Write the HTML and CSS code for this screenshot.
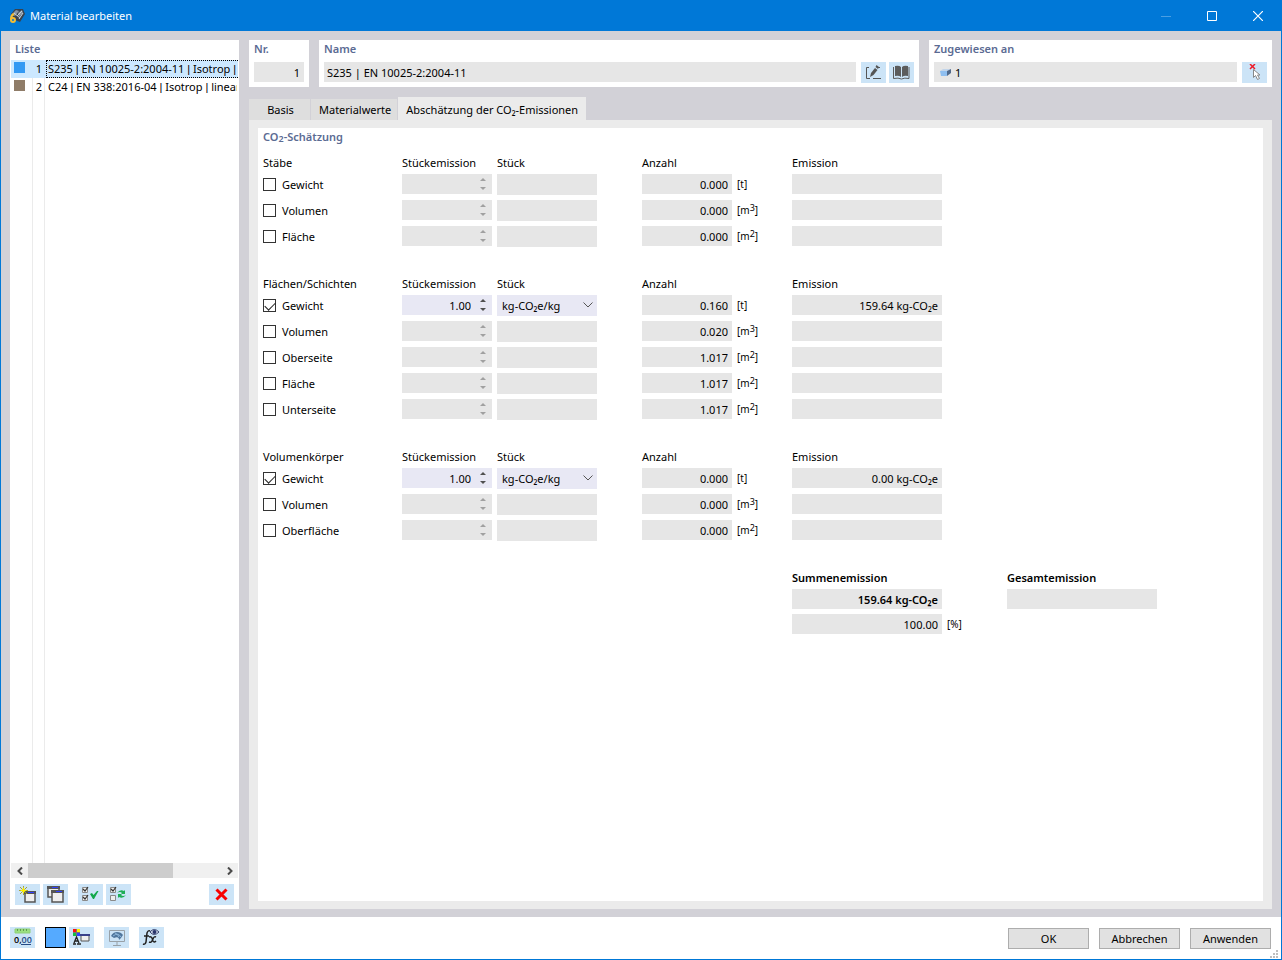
FILE: index.html
```html
<!DOCTYPE html>
<html lang="de">
<head>
<meta charset="utf-8">
<title>Material bearbeiten</title>
<link rel="stylesheet" href="styles.css">
</head>
<body>
<div class="window">
  <header class="titlebar">
    <svg class="app-icon" viewBox="0 0 16 16" width="16" height="16" aria-hidden="true">
      <path d="M2 6 6 1 14 1 16 6 11 14 6 12Z" fill="#38424e"/>
      <path d="M3 6 7 2 10 3 6 8ZM9 5l4-3 1 3-4 4Z" fill="#8795a5"/>
      <path d="M8 8l5-5M5 5l6 5M10 11l4-6" stroke="#c6d0da" stroke-width="1"/>
      <path d="M5 6Q2 7 2 11v1q0 2 2 2t2-2-2-2-2 2" fill="none" stroke="#f3bd35" stroke-width="2"/>
    </svg>
    <h1 class="window-title">Material bearbeiten</h1>
    <div class="window-controls">
      <button class="window-button" aria-label="Minimieren" disabled><svg width="10" height="10"><path d="M0 5.500h10" stroke="#4a9fe3"/></svg></button>
      <button class="window-button" aria-label="Maximieren"><svg width="10" height="10"><path d="M.5 .5h9v9h-9z" fill="none" stroke="#fff"/></svg></button>
      <button class="window-button" aria-label="Schließen"><svg width="10" height="10"><path d="M0 0l10 10M10 0L0 10" stroke="#fff" stroke-width="1.200"/></svg></button>
    </div>
  </header>

  <main class="workspace">
    <aside class="card list-panel">
      <h2 class="card-title" id="list-title">Liste</h2>
      <ul class="material-list" role="listbox" aria-labelledby="list-title">
        <li class="material selected" role="option" aria-selected="true"><span class="swatch swatch-steel"></span><span class="material-no">1</span><span class="material-name">S235 <span class="bar">|</span> EN 10025-2:2004-11 <span class="bar">|</span> Isotrop <span class="bar">|</span> linear elastisch</span></li>
        <li class="material" role="option" aria-selected="false"><span class="swatch swatch-wood"></span><span class="material-no">2</span><span class="material-name">C24 <span class="bar">|</span> EN 338:2016-04 <span class="bar">|</span> Isotrop <span class="bar">|</span> linear elastisch</span></li>
      </ul>
      <div class="scrollbar">
        <button class="scroll-arrow" aria-label="Nach links"><svg width="6" height="8"><path d="M5 .5L1.500 4 5 7.500" fill="none" stroke="#4a4a4a" stroke-width="2"/></svg></button>
        <div class="scroll-track"><div class="scroll-thumb"></div></div>
        <button class="scroll-arrow" aria-label="Nach rechts"><svg width="6" height="8"><path d="M1 .5L4.500 4 1 7.500" fill="none" stroke="#4a4a4a" stroke-width="2"/></svg></button>
      </div>
      <div class="list-tools">
        <button class="tool" aria-label="Neu"><svg width="17" height="17" viewBox="0 0 17 17"><path d="M6 6h10v10H6z" fill="#eee" stroke="#555" stroke-width="1.500"/><path d="M5 5h12v3H5z" fill="#555"/><path d="M9 6h6v1H9z" fill="#3040ff"/><path d="M4.500 0v9M0 4.500h9M1 1l7 7M8 1L1 8" stroke="#a3a03c"/><path d="M4.500 1l1 2.500L8 4.500l-2.500 1-1 2.500-1-2.500L1 4.500l2.500-1Z" fill="#fff200"/></svg></button>
        <button class="tool" aria-label="Kopieren"><svg width="17" height="17" viewBox="0 0 17 17"><path d="M1 1h11v10H1z" fill="#eee" stroke="#555" stroke-width="1.500"/><path d="M0 0h13v3H0z" fill="#555"/><path d="M5 1h6v1H5z" fill="#3040ff"/><path d="M5 5h11v11H5z" fill="#eee" stroke="#555" stroke-width="1.500"/><path d="M4 4h13v3H4z" fill="#555"/><path d="M9 5h6v1H9z" fill="#3040ff"/></svg></button>
        <button class="tool tool-spaced" aria-label="Alle auswählen"><svg width="17" height="17" viewBox="0 0 17 17"><path d="M.5 1.500h5v5h-5zM.5 9.500h5v5h-5z" fill="#eee" stroke="#8a8a8a"/><path d="M1 3l2 2 3-4M1 11l2 2 3-4" fill="none" stroke="#333" stroke-width="1.200"/><path d="M8 8l2-1 1.500 2L15 5h1.500L12 13h-1Z" fill="#12a84a"/></svg></button>
        <button class="tool" aria-label="Auswahl umkehren"><svg width="17" height="17" viewBox="0 0 17 17"><path d="M.5 1.500h5v5h-5zM.5 9.500h5v5h-5z" fill="#eee" stroke="#8a8a8a"/><path d="M1 3l2 2 3-4" fill="none" stroke="#333" stroke-width="1.200"/><path d="M7 7q3-4 7-2l1-1v4h-4l1-1q-2-2-5 0ZM16 9q-3 4-7 2l-1 1V8h4l-1 1q2 2 5 0Z" fill="#1fae57"/></svg></button>
        <button class="tool tool-end" aria-label="Löschen"><svg width="13" height="13" viewBox="0 0 13 13"><path d="M1.500 1.500l10 10M11.500 1.500l-10 10" stroke="#f80000" stroke-width="3"/></svg></button>
      </div>
    </aside>

    <section class="editor">
      <div class="head-row">
        <div class="card head-no">
          <label class="card-title" for="no">Nr.</label>
          <div class="head-fields"><input class="field num" id="no" value="1" readonly></div>
        </div>
        <div class="card head-name">
          <label class="card-title" for="name">Name</label>
          <div class="head-fields">
            <input class="field" id="name" value="S235 | EN 10025-2:2004-11" readonly>
            <button class="tool" aria-label="Name bearbeiten"><svg width="17" height="17" viewBox="0 0 17 17"><path d="M4 3.500H1.500v11H5M8 14.500h8M13 3.500h2" fill="none" stroke="#555"/><path d="M5 13l1-4 4-5 2.500 2L8.500 11Z" fill="#555"/><path d="M10.500 3l1-2L14 3l-1 2Z" fill="#555"/></svg></button>
            <button class="tool" aria-label="Bibliothek"><svg width="17" height="17" viewBox="0 0 17 17"><path d="M2 2q4-1 6 1v10q-2-2-6-1ZM15 2q-4-1-6 1v10q2-2 6-1Z" fill="#5c5c5c"/><path d="M.5 3v11.500q5-1 8 .5 3-1.500 7.500-.5V3" fill="none" stroke="#5c5c5c"/></svg></button>
          </div>
        </div>
        <div class="card head-assigned">
          <label class="card-title" for="assigned">Zugewiesen an</label>
          <div class="head-fields">
            <div class="field assigned-field"><svg width="11" height="8" viewBox="0 0 11 8"><path d="M0 2l3-2h8L7 2Z" fill="#c2d5ea"/><path d="M0 2h7v5H1Z" fill="#8fbff0"/><path d="M7 2l4-2v4L7 7Z" fill="#50698a"/></svg><input class="bare" id="assigned" value="1" readonly></div>
            <button class="tool" aria-label="Auswahl aufheben"><svg width="17" height="17" viewBox="0 0 17 17"><path d="M7.500 5.500v8l2-2 2 4 2-1-2-3.500h2.500Z" fill="#fff" stroke="#888"/><path d="M4 0l5 5M9 0L4 5" stroke="#ed1c2a" stroke-width="1.500"/></svg></button>
          </div>
        </div>
      </div>

      <div class="tabs" role="tablist">
        <button class="tab tab-short" role="tab" aria-selected="false">Basis</button>
        <button class="tab" role="tab" aria-selected="false">Materialwerte</button>
        <button class="tab active" role="tab" aria-selected="true">Abschätzung der CO₂-Emissionen</button>
      </div>
      <div class="tab-page" role="tabpanel">
        <div class="estimate">
          <h2 class="card-title">CO<sub>2</sub>-Schätzung</h2>

          <section class="group">
            <div class="line heading"><h3>Stäbe</h3><span>Stückemission</span><span>Stück</span><span>Anzahl</span><span></span><span>Emission</span></div>
            <div class="line">
              <label class="check"><input type="checkbox">Gewicht</label>
              <div class="spin off"><input aria-label="Stückemission" disabled><span class="steps"><button class="up" aria-label="Erhöhen" disabled></button><button class="down" aria-label="Verringern" disabled></button></span></div>
              <div class="pick off"><select aria-label="Stück" disabled></select></div>
              <input class="field num qty" aria-label="Anzahl" value="0.000" readonly><span class="unit">[t]</span>
              <input class="field num" aria-label="Emission" readonly>
            </div>
            <div class="line">
              <label class="check"><input type="checkbox">Volumen</label>
              <div class="spin off"><input aria-label="Stückemission" disabled><span class="steps"><button class="up" aria-label="Erhöhen" disabled></button><button class="down" aria-label="Verringern" disabled></button></span></div>
              <div class="pick off"><select aria-label="Stück" disabled></select></div>
              <input class="field num qty" aria-label="Anzahl" value="0.000" readonly><span class="unit">[m<sup>3</sup>]</span>
              <input class="field num" aria-label="Emission" readonly>
            </div>
            <div class="line">
              <label class="check"><input type="checkbox">Fläche</label>
              <div class="spin off"><input aria-label="Stückemission" disabled><span class="steps"><button class="up" aria-label="Erhöhen" disabled></button><button class="down" aria-label="Verringern" disabled></button></span></div>
              <div class="pick off"><select aria-label="Stück" disabled></select></div>
              <input class="field num qty" aria-label="Anzahl" value="0.000" readonly><span class="unit">[m<sup>2</sup>]</span>
              <input class="field num" aria-label="Emission" readonly>
            </div>
          </section>

          <section class="group">
            <div class="line heading"><h3>Flächen/Schichten</h3><span>Stückemission</span><span>Stück</span><span>Anzahl</span><span></span><span>Emission</span></div>
            <div class="line">
              <label class="check"><input type="checkbox" checked>Gewicht</label>
              <div class="spin"><input aria-label="Stückemission" value="1.00"><span class="steps"><button class="up" aria-label="Erhöhen"></button><button class="down" aria-label="Verringern"></button></span></div>
              <div class="pick"><select aria-label="Stück"><option>kg-CO₂e/kg</option></select><svg class="chevron" width="10" height="6"><path d="M.5 .5L5 5 9.500 .5" fill="none" stroke="#555"/></svg></div>
              <input class="field num qty" aria-label="Anzahl" value="0.160" readonly><span class="unit">[t]</span>
              <input class="field num" aria-label="Emission" value="159.64 kg-CO₂e" readonly>
            </div>
            <div class="line">
              <label class="check"><input type="checkbox">Volumen</label>
              <div class="spin off"><input aria-label="Stückemission" disabled><span class="steps"><button class="up" aria-label="Erhöhen" disabled></button><button class="down" aria-label="Verringern" disabled></button></span></div>
              <div class="pick off"><select aria-label="Stück" disabled></select></div>
              <input class="field num qty" aria-label="Anzahl" value="0.020" readonly><span class="unit">[m<sup>3</sup>]</span>
              <input class="field num" aria-label="Emission" readonly>
            </div>
            <div class="line">
              <label class="check"><input type="checkbox">Oberseite</label>
              <div class="spin off"><input aria-label="Stückemission" disabled><span class="steps"><button class="up" aria-label="Erhöhen" disabled></button><button class="down" aria-label="Verringern" disabled></button></span></div>
              <div class="pick off"><select aria-label="Stück" disabled></select></div>
              <input class="field num qty" aria-label="Anzahl" value="1.017" readonly><span class="unit">[m<sup>2</sup>]</span>
              <input class="field num" aria-label="Emission" readonly>
            </div>
            <div class="line">
              <label class="check"><input type="checkbox">Fläche</label>
              <div class="spin off"><input aria-label="Stückemission" disabled><span class="steps"><button class="up" aria-label="Erhöhen" disabled></button><button class="down" aria-label="Verringern" disabled></button></span></div>
              <div class="pick off"><select aria-label="Stück" disabled></select></div>
              <input class="field num qty" aria-label="Anzahl" value="1.017" readonly><span class="unit">[m<sup>2</sup>]</span>
              <input class="field num" aria-label="Emission" readonly>
            </div>
            <div class="line">
              <label class="check"><input type="checkbox">Unterseite</label>
              <div class="spin off"><input aria-label="Stückemission" disabled><span class="steps"><button class="up" aria-label="Erhöhen" disabled></button><button class="down" aria-label="Verringern" disabled></button></span></div>
              <div class="pick off"><select aria-label="Stück" disabled></select></div>
              <input class="field num qty" aria-label="Anzahl" value="1.017" readonly><span class="unit">[m<sup>2</sup>]</span>
              <input class="field num" aria-label="Emission" readonly>
            </div>
          </section>

          <section class="group">
            <div class="line heading"><h3>Volumenkörper</h3><span>Stückemission</span><span>Stück</span><span>Anzahl</span><span></span><span>Emission</span></div>
            <div class="line">
              <label class="check"><input type="checkbox" checked>Gewicht</label>
              <div class="spin"><input aria-label="Stückemission" value="1.00"><span class="steps"><button class="up" aria-label="Erhöhen"></button><button class="down" aria-label="Verringern"></button></span></div>
              <div class="pick"><select aria-label="Stück"><option>kg-CO₂e/kg</option></select><svg class="chevron" width="10" height="6"><path d="M.5 .5L5 5 9.500 .5" fill="none" stroke="#555"/></svg></div>
              <input class="field num qty" aria-label="Anzahl" value="0.000" readonly><span class="unit">[t]</span>
              <input class="field num" aria-label="Emission" value="0.00 kg-CO₂e" readonly>
            </div>
            <div class="line">
              <label class="check"><input type="checkbox">Volumen</label>
              <div class="spin off"><input aria-label="Stückemission" disabled><span class="steps"><button class="up" aria-label="Erhöhen" disabled></button><button class="down" aria-label="Verringern" disabled></button></span></div>
              <div class="pick off"><select aria-label="Stück" disabled></select></div>
              <input class="field num qty" aria-label="Anzahl" value="0.000" readonly><span class="unit">[m<sup>3</sup>]</span>
              <input class="field num" aria-label="Emission" readonly>
            </div>
            <div class="line">
              <label class="check"><input type="checkbox">Oberfläche</label>
              <div class="spin off"><input aria-label="Stückemission" disabled><span class="steps"><button class="up" aria-label="Erhöhen" disabled></button><button class="down" aria-label="Verringern" disabled></button></span></div>
              <div class="pick off"><select aria-label="Stück" disabled></select></div>
              <input class="field num qty" aria-label="Anzahl" value="0.000" readonly><span class="unit">[m<sup>2</sup>]</span>
              <input class="field num" aria-label="Emission" readonly>
            </div>
          </section>

          <section class="totals">
            <div class="total">
              <label for="sum">Summenemission</label>
              <input class="field num strong" id="sum" value="159.64 kg-CO₂e" readonly>
              <div class="percent"><input class="field num" aria-label="Anteil" value="100.00" readonly><span class="unit">[%]</span></div>
            </div>
            <div class="total">
              <label for="overall">Gesamtemission</label>
              <input class="field num" id="overall" readonly>
            </div>
          </section>
        </div>
      </div>
    </section>
  </main>

  <footer class="footer">
    <div class="footer-tools">
      <button class="tool" aria-label="Einheiten"><svg width="19" height="19" viewBox="0 0 19 19"><path d="M2 1h15v4H2z" fill="#9be081" stroke="#8fcf78"/><path d="M4.500 1v2M7.500 1v2M10.500 1v2M13.500 1v2" stroke="#629d50"/><text class="icon-digits" x="1" y="15">0,<tspan fill="#244a86">00</tspan></text><path d="M8 16.500h10" stroke="#244a86"/></svg></button>
      <button class="color-button" aria-label="Farbe"></button>
      <button class="tool tool-near" aria-label="Darstellung"><svg width="19" height="19" viewBox="0 0 19 19"><path d="M1 1h7v7H1z" fill="#777"/><path d="M1 1h3v3H1z" fill="#ff1010"/><path d="M5 1h3v3H5z" fill="#fff000"/><path d="M1 5h3v3H1z" fill="#16c044"/><path d="M5 5h3v3H5z" fill="#3040ff"/><path d="M2 15l2.500-6L7 15M3 13h3M1 16h3M5 16h4" fill="none" stroke="#222" stroke-width="1.300"/><path d="M9 7h8v6H9z" fill="#eee" stroke="#555"/><path d="M8 6h10v2H8z" fill="#38408a"/></svg></button>
      <button class="tool tool-gap" aria-label="Ansicht"><svg width="18" height="18" viewBox="0 0 18 18"><path d="M1.500 1.500h15v11h-15zM9 13v3M5 16.500h8" fill="none" stroke="#98a1a8"/><path d="M3 7q2-4 6-4t6 3l-2 3-2 2q0-4-5-2Z" fill="#4f769d"/><path d="M5 7q5-4 8 1M7 4q3 1 4 4" fill="none" stroke="#8fb8dc"/></svg></button>
      <button class="tool tool-gap" aria-label="Formel"><svg width="19" height="19" viewBox="0 0 19 19"><path d="M8 3q-2-1-3 2L4 14q-1 3-3 2M2 8h5" fill="none" stroke="#222" stroke-width="1.500"/><path d="M7 9q2-1 3 1l1 3q1 2 3 0M14 9q-2-1-3 2l-1 2q-1 2-3 1" fill="none" stroke="#222" stroke-width="1.500"/><path d="M8 4q4-5 9 0-5 5-9 0Z" fill="#dce5f4" stroke="#39436f"/><circle cx="12.500" cy="4" r="2" fill="#28346c"/></svg></button>
    </div>
    <div class="dialog-actions">
      <button class="action">OK</button>
      <button class="action">Abbrechen</button>
      <button class="action">Anwenden</button>
    </div>
    <svg class="grip" width="8" height="8" aria-hidden="true"><path d="M6 0h2v2H6zM3 3h2v2H3zM6 3h2v2H6zM0 6h2v2H0zM3 6h2v2H3zM6 6h2v2H6z" fill="#bfbfbf"/></svg>
  </footer>
</div>
</body>
</html>
```

FILE: styles.css
```css
* { box-sizing: border-box; }

body {
  margin: 0;
  color: #000;
  font: 11px/16px "Noto Sans", "Open Sans", sans-serif;
}

button, input, select {
  margin: 0;
  padding: 0;
  border: 0;
  border-radius: 0;
  color: inherit;
  font: inherit;
}

h1, h2, h3 { margin: 0; font: inherit; }
svg { display: block; flex: none; }

.window {
  display: flex;
  flex-direction: column;
  min-height: 100vh;
  border: 1px solid #0078d7;
  border-top: 0;
  background: #d2d1d7;
}

/* Title bar */
.titlebar {
  display: flex;
  align-items: center;
  height: 31px;
  padding-left: 8px;
  gap: 5px;
  background: #0078d7;
  color: #fff;
}
.window-title { flex: 1; font-size: 11px; }
.window-controls { display: flex; height: 100%; }
.window-button {
  display: grid;
  place-items: center;
  width: 46px;
  background: none;
}

/* Main area */
.workspace {
  display: flex;
  flex: 1;
  gap: 10px;
  padding: 9px 9px 8px;
}
.card { background: #fff; }
.card-title {
  display: block;
  color: #5b6b93;
  font-weight: 600;
}
.card-title sub { font-size: 9px; line-height: 0; vertical-align: -1px; }

.list-panel {
  display: flex;
  flex: none;
  flex-direction: column;
  width: 229px;
  padding: 1px 1px 4px;
}
.list-panel .card-title { padding-left: 4px; margin-bottom: 3px; }
.material-list {
  display: flex;
  flex: 1;
  flex-direction: column;
  margin: 0;
  padding: 0;
  list-style: none;
  background: linear-gradient(#ebebeb, #ebebeb) 21px 0 / 1px 100% no-repeat,
    linear-gradient(#ebebeb, #ebebeb) 33px 0 / 1px 100% no-repeat;
}
.material {
  display: grid;
  grid-template-columns: 21px 13px 1fr;
  height: 18px;
  line-height: 17px;
}
.material.selected { background: #cce8ff; }
.swatch { width: 11px; height: 11px; margin: 2px 3px; }
.swatch-steel { background: #3399f3; }
.swatch-wood { background: #8f7c68; }
.material-no { padding-right: 3px; text-align: right; }
.material-name {
  overflow: hidden;
  margin-left: 1px;
  padding-left: 1px;
  border: 1px solid transparent;
  line-height: 15px;
  white-space: nowrap;
}
.selected .material-name { border: 1px dotted #000; border-right: 0; }
.bar { font-family: "Liberation Sans", sans-serif; }

.scrollbar { display: flex; height: 15px; background: #f0f0f0; }
.scroll-arrow { display: grid; place-items: center; width: 17px; background: none; }
.scroll-track { flex: 1; }
.scroll-thumb { width: 75%; height: 100%; background: #cdcdcd; }

.list-tools { display: flex; gap: 3px; padding: 6px 4px 0; }
.tool {
  display: grid;
  flex: none;
  place-items: center;
  width: 25px;
  height: 21px;
  background: #cce4f7;
}
.tool-spaced { margin-left: 7px; }
.tool-end { margin-left: auto; }

/* Header cards */
.editor { display: flex; flex: 1; flex-direction: column; min-width: 0; }
.head-row {
  display: grid;
  grid-template-columns: 60px 600fr 343fr;
  gap: 10px;
}
.head-row .card { min-width: 0; padding: 1px 5px 4px; }
.head-fields { display: flex; gap: 3px; margin-top: 5px; }
.head-fields .field { flex: 1; min-width: 0; padding-left: 3px; }
.head-fields .field + .tool { margin-left: 2px; }

.field {
  width: 100%;
  height: 20px;
  padding: 1px 4px 0;
  background: #e6e6e6;
}
.num { text-align: right; }
.assigned-field { display: flex; align-items: center; gap: 4px; }
.head-fields .assigned-field { padding-left: 6px; }
.bare { flex: 1; min-width: 0; background: none; }

/* Tabs */
.tabs { display: flex; align-items: flex-end; margin-top: 10px; }
.tab {
  height: 21px;
  padding: 0 6px 0 8px;
  border-right: 1px solid #d2d1d7;
  background: #dedede;
}
.tab-short { width: 62px; }
.tab.active { height: 23px; padding: 2px 8px 0; border-right: 0; background: #ebebeb; }
.tab-page {
  display: flex;
  flex: 1;
  padding: 8px 9px;
  background: #ebebeb;
}

/* Emission estimate */
.estimate { flex: 1; padding: 1px 5px; background: #fff; }
.estimate > .card-title { margin-bottom: 10px; }
.group { margin-bottom: 27px; }
.line {
  display: grid;
  grid-template-columns: 139px 95px 145px 95px 55px 150px;
  align-items: center;
  height: 26px;
}
.line.heading { height: 16px; }
.check { display: flex; align-items: center; gap: 6px; padding-top: 1px; }
.check input {
  position: relative;
  width: 13px;
  height: 13px;
  border: 1px solid #333;
  background: #fff;
  appearance: none;
}
.check input:checked::after {
  content: "";
  position: absolute;
  top: 2px;
  left: 1px;
  width: 9px;
  height: 5px;
  border: solid #222;
  border-width: 0 0 1px 1px;
  transform: rotate(-45deg);
}
.spin {
  display: flex;
  width: 90px;
  height: 20px;
  background: #e8e8f4;
}
.spin input {
  flex: 1;
  min-width: 0;
  margin-right: 3px;
  padding-top: 1px;
  background: none;
  text-align: right;
}
.steps {
  display: flex;
  flex-direction: column;
  justify-content: center;
  align-items: center;
  gap: 6px;
  width: 18px;
  color: #505050;
}
.spin.off .steps { color: #a0a0a0; }
.up, .down {
  width: 6px;
  height: 3px;
  background: currentColor;
  clip-path: polygon(50% 0, 100% 100%, 0 100%);
}
.down { clip-path: polygon(0 0, 100% 0, 50% 100%); }
.pick { position: relative; width: 100px; height: 21px; background: #e8e8f4; }
.pick select {
  display: block;
  width: 100%;
  height: 100%;
  padding: 1px 5px 0;
  background: none;
  appearance: none;
}
.chevron { position: absolute; top: 7px; right: 4px; pointer-events: none; }
.spin.off, .pick.off { background: #e6e6e6; }
.qty { width: 90px; }
.unit { font-size: 10px; }
.unit sup { font-size: 9px; line-height: 0; vertical-align: 3px; }

.totals { display: flex; gap: 65px; padding-left: 529px; }
.total { display: flex; flex-direction: column; width: 150px; }
.total label { margin-bottom: 3px; font-weight: 600; }
.strong { font-weight: 600; }
.percent { display: flex; align-items: center; gap: 5px; margin-top: 5px; }
.percent .field { flex: none; }

/* Footer */
.footer {
  position: relative;
  display: flex;
  justify-content: space-between;
  height: 42px;
  padding: 10px 10px 0 9px;
  background: #fff;
}
.footer-tools { display: flex; align-items: flex-start; }
.color-button {
  width: 21px;
  height: 21px;
  margin-left: 10px;
  border: 1px solid #000;
  background: #55aaff;
}
.tool-near { margin-left: 3px; }
.tool-gap { margin-left: 10px; }
.icon-digits { font: 600 9px "Open Sans", sans-serif; }
.dialog-actions { display: flex; gap: 10px; padding-top: 1px; }
.action {
  width: 81px;
  height: 21px;
  border: 1px solid #adadad;
  background: #e1e1e1;
}
.grip { position: absolute; right: 3px; bottom: 1px; }
```
